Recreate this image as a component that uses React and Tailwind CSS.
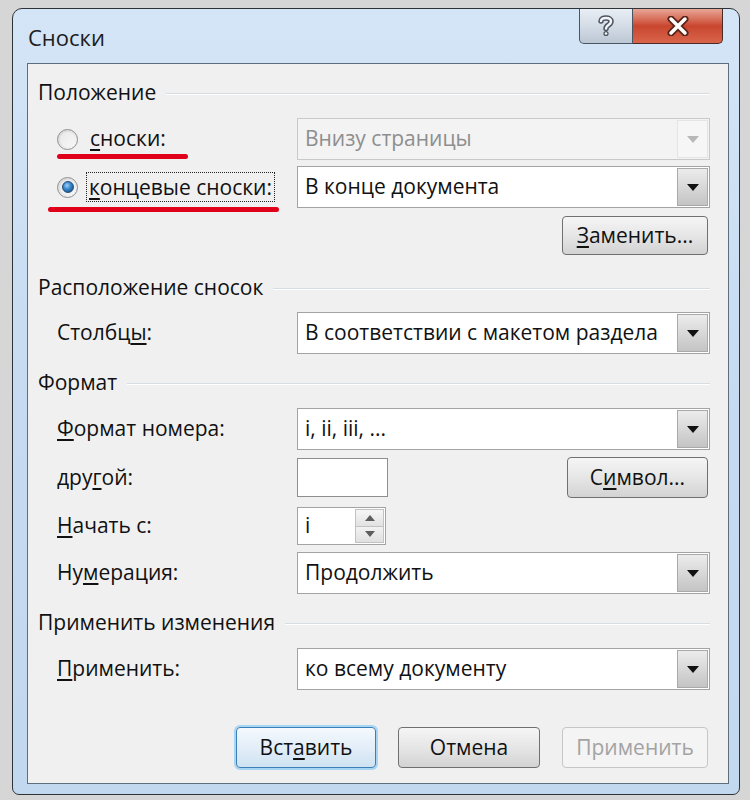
import React from "react";

const F = { fontFamily: '"Open Sans", "Noto Sans", sans-serif' };

function Arrow({ disabled }) {
  return (
    <div
      className={
        "w-[31px] self-stretch m-[1px] flex items-center justify-center border " +
        (disabled
          ? "border-[#e4e4e4] bg-[#f6f6f6]"
          : "border-[#a9a9a9] bg-gradient-to-b from-[#ececec] via-[#d8d8d8] to-[#c4c4c4]")
      }
    >
      <svg width="12" height="7" viewBox="0 0 12 7">
        <path d="M0 0 L12 0 L6 7 Z" fill={disabled ? "#b8b8b8" : "#111"} />
      </svg>
    </div>
  );
}

function Combo({ text, disabled }) {
  return (
    <div
      className={
        "flex-1 h-full flex items-stretch border " +
        (disabled ? "border-[#c9c9c9] bg-[#f3f3f3]" : "border-[#a3a3a3] bg-white")
      }
    >
      <div
        className={
          "flex-1 flex items-center pl-[7px] text-[21px] whitespace-nowrap " +
          (disabled ? "text-[#8e8e8e]" : "text-[#111]")
        }
      >
        {text}
      </div>
      <Arrow disabled={disabled} />
    </div>
  );
}

function Btn({ children, w, h = 39, kind = "normal" }) {
  const cls =
    kind === "default"
      ? "border-[#3a7fb5] shadow-[0_0_0_2px_#a9d5f5] bg-gradient-to-b from-[#f4f9fd] via-[#e3eef8] to-[#cfe2f2] text-[#111]"
      : kind === "disabled"
      ? "border-[#c6c6c6] bg-[#f4f4f4] text-[#a3a3a3]"
      : "border-[#707070] bg-gradient-to-b from-[#f5f5f5] via-[#e6e6e6] to-[#d3d3d3] text-[#111]";
  return (
    <div
      className={"rounded-[4px] border flex items-center justify-center text-[21px] whitespace-nowrap " + cls}
      style={{ width: w, height: h }}
    >
      {children}
    </div>
  );
}

function Header({ children, mt }) {
  return (
    <div className="h-[30px] flex items-center pl-[10px] pr-[18px]" style={{ marginTop: mt }}>
      <span className="text-[21px] text-[#111] whitespace-nowrap">{children}</span>
      <div className="flex-1 ml-[10px] border-t border-[#d6dde3] border-b-white border-b h-0 mt-[2px]" />
    </div>
  );
}

function Row({ label, children, mt, h = 42 }) {
  return (
    <div className="flex items-center pr-[18px]" style={{ marginTop: mt, height: h }}>
      <div className="w-[269px] shrink-0 pl-[29px] text-[21px] text-[#111]">{label}</div>
      {children}
    </div>
  );
}

function Radio({ checked }) {
  return (
    <div className="w-[21px] h-[21px] rounded-full border border-[#8d8f91] bg-gradient-to-br from-[#d4d4d4] to-[#fbfbfb] flex items-center justify-center shrink-0">
      <div className="w-[15px] h-[15px] rounded-full bg-gradient-to-br from-[#e9e9e9] to-[#f7f7f7] flex items-center justify-center">
        {checked && (
          <div className="w-[12px] h-[12px] rounded-full bg-[radial-gradient(circle_at_40%_35%,#9fd3f5_0%,#3a8ad0_40%,#123e6e_100%)] border border-[#1f4f7d]" />
        )}
      </div>
    </div>
  );
}

const U = ({ children }) => <span className="underline underline-offset-[3px]">{children}</span>;

export default function App() {
  return (
    <div className="w-[750px] h-[800px] bg-[#d6d6d6] pt-[8px] pl-[12px]" style={F}>
      <div className="w-[728px] h-[787px] rounded-t-[10px] rounded-b-[7px] border border-[#2e3338] bg-gradient-to-b from-[#d4e5f7] via-[#c6dbf1] to-[#c2d8ef] flex flex-col">
        {/* title bar */}
        <div className="h-[54px] flex items-start justify-between shrink-0">
          <div className="self-center pl-[15px] pt-[2px] text-[22px] text-[#1c1c1c]">Сноски</div>
          <div className="flex mr-[16px]">
            <div className="w-[54px] h-[35px] rounded-bl-[5px] border border-t-0 border-[#4a5563] bg-gradient-to-b from-[#e9eef4] via-[#d4dce6] to-[#bcc7d4] flex items-center justify-center">
              <svg width="16" height="22" viewBox="0 0 16 22">
                <path
                  d="M3 6 C3 2 13 1.5 13 6.5 C13 10 8 10 8 13.5"
                  fill="none"
                  stroke="#4d5560"
                  strokeWidth="5.5"
                  strokeLinecap="round"
                />
                <path
                  d="M3 6 C3 2 13 1.5 13 6.5 C13 10 8 10 8 13.5"
                  fill="none"
                  stroke="#f3f5f8"
                  strokeWidth="2.5"
                  strokeLinecap="round"
                />
                <circle cx="8" cy="18.5" r="2.6" fill="#4d5560" />
                <circle cx="8" cy="18.5" r="1.3" fill="#f3f5f8" />
              </svg>
            </div>
            <div className="w-[90px] h-[35px] rounded-br-[5px] border border-t-0 border-l-0 border-[#4a2a24] bg-gradient-to-b from-[#e8a596] via-[#c9452e] to-[#d8654b] flex items-center justify-center">
              <svg width="24" height="20" viewBox="0 0 24 20">
                <path d="M5 3 L19 17 M19 3 L5 17" stroke="#5a2418" strokeWidth="7" strokeLinecap="round" />
                <path d="M5 3 L19 17 M19 3 L5 17" stroke="#ffffff" strokeWidth="3.5" strokeLinecap="round" />
              </svg>
            </div>
          </div>
        </div>

        {/* client */}
        <div className="ml-[14px] mr-[10px] mb-[10px] flex-1 border border-[#5e6e7f] bg-[#f0f0f0] flex flex-col">
          <Header mt={14}>Положение</Header>

          <div className="relative flex items-center pr-[18px] h-[42px] mt-[10px]">
            <div className="w-[269px] shrink-0 pl-[29px] flex items-center">
              <Radio />
              <span className="ml-[12px] text-[21px] text-[#111]">
                <U>с</U>носки:
              </span>
            </div>
            <Combo text="Внизу страницы" disabled />
            <div className="absolute left-[29px] top-[36px] w-[131px] h-[5px] rounded-full bg-[#e1001a]" />
          </div>

          <div className="relative flex items-center pr-[18px] h-[42px] mt-[6px]">
            <div className="w-[269px] shrink-0 pl-[29px] flex items-center">
              <Radio checked />
              <span className="ml-[8px] px-[2px] py-[2px] border border-dotted border-[#222] text-[21px] text-[#111] leading-[24px] whitespace-nowrap">
                <U>к</U>онцевые сноски:
              </span>
            </div>
            <Combo text="В конце документа" />
            <div className="absolute left-[20px] top-[41px] w-[231px] h-[5px] rounded-full bg-[#e1001a]" />
          </div>

          <div className="flex justify-end pr-[20px] mt-[8px]">
            <Btn w={146} h={39}>
              <span>
                <U>З</U>аменить...
              </span>
            </Btn>
          </div>

          <Header mt={18}>Расположение сносок</Header>
          <Row mt={9} label={<span>Столбц<U>ы</U>:</span>}>
            <Combo text="В соответствии с макетом раздела" />
          </Row>

          <Header mt={14}>Формат</Header>
          <Row mt={10} label={<span><U>Ф</U>ормат номера:</span>}>
            <Combo text="i, ii, iii, ..." />
          </Row>
          <div className="flex items-center pr-[20px] mt-[7px] h-[41px]">
            <div className="w-[269px] shrink-0 pl-[29px] text-[21px] text-[#111]">
              дру<U>г</U>ой:
            </div>
            <div className="w-[91px] h-[39px] border border-[#8e8e8e] bg-white" />
            <div className="flex-1" />
            <Btn w={141} h={41}>
              <span>
                С<U>и</U>мвол...
              </span>
            </Btn>
          </div>
          <Row mt={9} h={38} label={<span><U>Н</U>ачать с:</span>}>
            <div className="w-[89px] h-full border border-[#a3a3a3] bg-white flex items-stretch">
              <div className="flex-1 flex items-center pl-[7px] text-[21px] text-[#111]">i</div>
              <div className="w-[29px] m-[1px] flex flex-col">
                <div className="flex-1 border border-[#c2c2c2] bg-gradient-to-b from-[#f6f6f6] to-[#e2e2e2] flex items-center justify-center">
                  <svg width="10" height="6" viewBox="0 0 10 6">
                    <path d="M0 6 L10 6 L5 0 Z" fill="#5d5d5d" />
                  </svg>
                </div>
                <div className="flex-1 border border-t-0 border-[#c2c2c2] bg-gradient-to-b from-[#f2f2f2] to-[#e0e0e0] flex items-center justify-center">
                  <svg width="10" height="6" viewBox="0 0 10 6">
                    <path d="M0 0 L10 0 L5 6 Z" fill="#5d5d5d" />
                  </svg>
                </div>
              </div>
            </div>
          </Row>
          <Row mt={7} label={<span>Ну<U>м</U>ерация:</span>}>
            <Combo text="Продолжить" />
          </Row>

          <Header mt={14}>Применить изменения</Header>
          <Row mt={10} label={<span><U>П</U>рименить:</span>}>
            <Combo text="ко всему документу" />
          </Row>

          <div className="flex justify-end gap-[22px] pr-[20px] mt-[37px]">
            <Btn w={140} h={41} kind="default">
              <span>
                Вст<U>а</U>вить
              </span>
            </Btn>
            <Btn w={142} h={41}>Отмена</Btn>
            <Btn w={146} h={41} kind="disabled">
              Применить
            </Btn>
          </div>
        </div>
      </div>
    </div>
  );
}
